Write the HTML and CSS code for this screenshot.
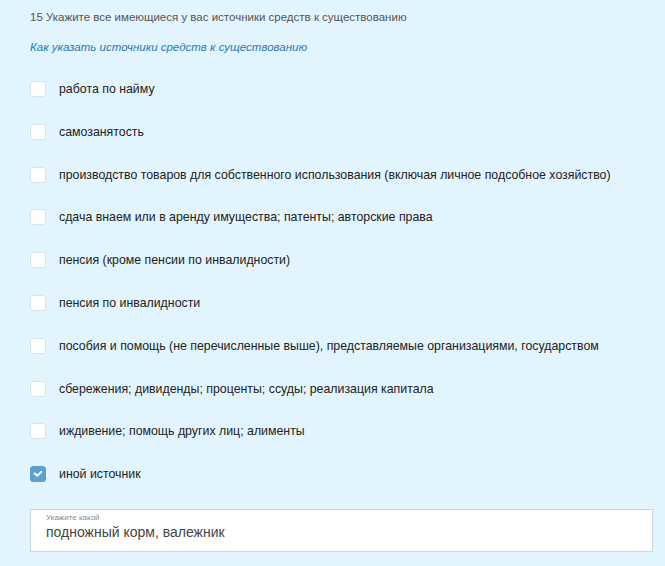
FILE: index.html
```html
<!DOCTYPE html>
<html lang="ru">
<head>
<meta charset="utf-8">
<link rel="stylesheet" href="styles.css">
</head>
<body>
<div class="question">
  <div class="title">15 Укажите все имеющиеся у вас источники средств к существованию</div>
  <a class="hint" href="#">Как указать источники средств к существованию</a>
  <ul class="options">
    <li class="option"><span class="box"></span><span class="label">работа по найму</span></li>
    <li class="option"><span class="box"></span><span class="label">самозанятость</span></li>
    <li class="option"><span class="box"></span><span class="label">производство товаров для собственного использования (включая личное подсобное хозяйство)</span></li>
    <li class="option"><span class="box"></span><span class="label">сдача внаем или в аренду имущества; патенты; авторские права</span></li>
    <li class="option"><span class="box"></span><span class="label">пенсия (кроме пенсии по инвалидности)</span></li>
    <li class="option"><span class="box"></span><span class="label">пенсия по инвалидности</span></li>
    <li class="option"><span class="box"></span><span class="label">пособия и помощь (не перечисленные выше), представляемые организациями, государством</span></li>
    <li class="option"><span class="box"></span><span class="label">сбережения; дивиденды; проценты; ссуды; реализация капитала</span></li>
    <li class="option"><span class="box"></span><span class="label">иждивение; помощь других лиц; алименты</span></li>
    <li class="option"><span class="box checked"><svg viewBox="0 0 16 16" width="16" height="16"><path d="M4.3 7.4 L7.1 10 L11.7 5.6" fill="none" stroke="#fff" stroke-width="2.4" stroke-linecap="round" stroke-linejoin="round"/></svg></span><span class="label">иной источник</span></li>
  </ul>
  <div class="field">
    <div class="field-label">Укажите какой</div>
    <div class="field-value">подножный корм, валежник</div>
  </div>
</div>
</body>
</html>
```

FILE: styles.css
```css
html, body {
  margin: 0;
  padding: 0;
  background: #e2f4fd;
}
body {
  font-family: "Liberation Sans", Arial, sans-serif;
  width: 665px;
  height: 566px;
  overflow: hidden;
}
.question {
  padding: 10px 12px 0 30px;
}
.title {
  font-size: 11.5px;
  line-height: 14px;
  color: #555;
}
.hint {
  display: block;
  margin-top: 16px;
  font-size: 11.5px;
  line-height: 14px;
  font-style: italic;
  color: #2d79b0;
  text-decoration: none;
}
.options {
  list-style: none;
  margin: 27px 0 0;
  padding: 0;
}
.option {
  display: flex;
  align-items: center;
  height: 16px;
  margin-bottom: 26.8px;
}
.box {
  flex: none;
  width: 16px;
  height: 16px;
  box-sizing: border-box;
  border: 1px solid #d6e4ec;
  border-radius: 3px;
  background: #fff;
  display: flex;
  align-items: center;
  justify-content: center;
}
.box.checked {
  background: #5e9fd1;
  border-color: #5e9fd1;
}
.box svg {
  display: block;
}
.label {
  margin-left: 13px;
  font-size: 12.35px;
  line-height: 16px;
  color: #222;
  white-space: nowrap;
}
.field {
  margin-top: 0;
  width: 623px;
  height: 43px;
  box-sizing: border-box;
  background: #fff;
  border: 1px solid #ccd6dc;
  padding: 3px 15px 0 15px;
}
.field-label {
  font-size: 8px;
  line-height: 9px;
  color: #888;
}
.field-value {
  margin-top: 2px;
  font-size: 14px;
  line-height: 17px;
  color: #444;
}
```
